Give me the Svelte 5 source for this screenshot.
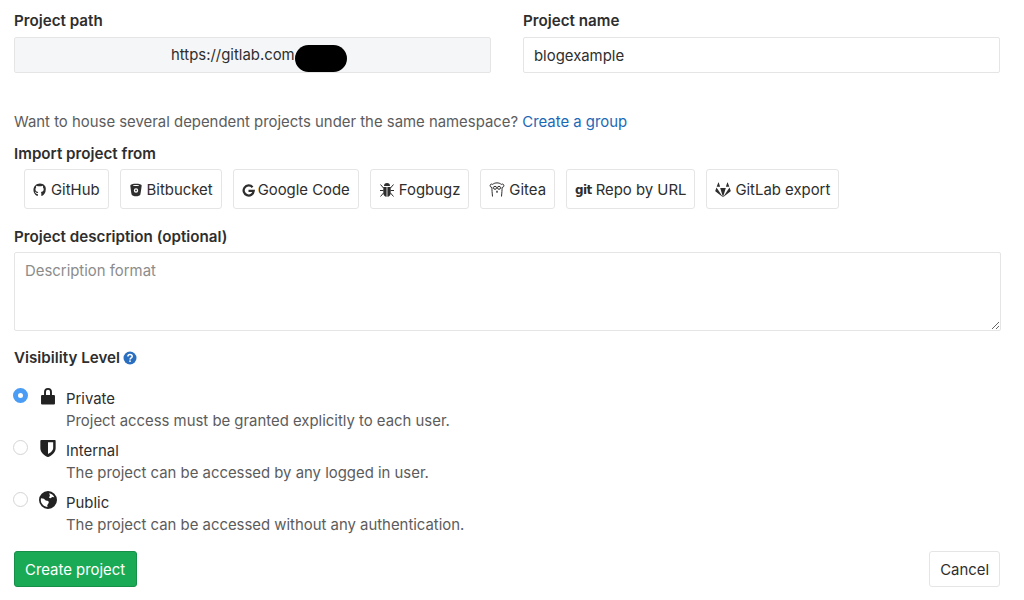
<script>
  let description = $state("");

  const importers = [
    { id: "github", label: "GitHub" },
    { id: "bitbucket", label: "Bitbucket" },
    { id: "google", label: "Google Code" },
    { id: "fogbugz", label: "Fogbugz" },
    { id: "gitea", label: "Gitea" },
    { id: "git", label: "Repo by URL" },
    { id: "gitlab", label: "GitLab export" },
  ];

  const levels = [
    { id: "private", label: "Private", help: "Project access must be granted explicitly to each user." },
    { id: "internal", label: "Internal", help: "The project can be accessed by any logged in user." },
    { id: "public", label: "Public", help: "The project can be accessed without any authentication." },
  ];

  let visibility = $state("private");
</script>

<form class="page" onsubmit={(e) => e.preventDefault()}>
  <div class="top-row">
    <div>
      <div class="label">Project path</div>
      <div class="path-field">
        <span>https://gitlab.com</span>
        <span class="blob"></span>
      </div>
    </div>
    <div>
      <div class="label">Project name</div>
      <input class="name-input" type="text" value="blogexample" />
    </div>
  </div>

  <p class="hint">
    Want to house several dependent projects under the same namespace?
    <a href="#group">Create a group</a>
  </p>

  <div class="label import-label">Import project from</div>
  <div class="importers">
    {#each importers as item}
      <button type="button" class="btn import-btn">
        {#if item.id === "github"}
          <svg class="icon" viewBox="0 0 16 16"><path d="M8 .5C3.800.5.500 3.800.500 8c0 3 1.700 5.600 4.300 6.800.4.100.7-.1.700-.5v-1.800c-1.300.2-2.100-.3-2.500-1.200-.2-.5-.5-.8-.9-1.100.6-.2 1.200.1 1.600.7.400.6 1 .8 1.800.5.100-.4.300-.8.600-1-2-.3-3.300-1.300-3.300-3.300 0-.9.300-1.600.8-2.100-.2-.6-.2-1.300.1-2 .8 0 1.400.3 2 .8.700-.2 2.900-.2 3.600 0 .6-.5 1.200-.8 2-.8.300.7.300 1.400.1 2 .5.500.8 1.200.8 2.100 0 2-1.300 3-3.300 3.300.4.300.6.800.6 1.400v2.500c0 .4.300.6.700.5 2.600-1.200 4.300-3.800 4.300-6.800C15.500 3.800 12.200.5 8 .5z" /></svg>
        {:else if item.id === "bitbucket"}
          <svg class="icon" viewBox="0 0 16 16"><path fill-rule="evenodd" d="M8 .8C4.500.8 1.500 1.500 1.500 2.800c0 .6 1 8.200 1.500 10.300.300 1.200 2.700 2.100 5 2.100s4.700-.9 5-2.100c.5-2.100 1.500-9.700 1.500-10.300C14.500 1.500 11.500.8 8 .8zm0 1.500c1.900 0 3.500.2 3.500.6S9.900 3.500 8 3.500s-3.500-.2-3.500-.6S6.100 2.300 8 2.300zM8 6a2.500 2.500 0 1 1 0 5 2.500 2.500 0 0 1 0-5zm0 1.500a1 1 0 1 0 0 2 1 1 0 0 0 0-2z" /></svg>
        {:else if item.id === "google"}
          <svg class="icon tight" viewBox="0 0 16 16"><path class="line thick" d="M13 4a6.200 6.200 0 1 0 1.400 4.500H8" /></svg>
        {:else if item.id === "fogbugz"}
          <svg class="icon wide" viewBox="0 0 16 16"><path d="M5 4a3 3 0 0 1 6 0zM4.300 5h3.300v9.800C5.500 14.600 4.300 13 4.300 11zM8.400 5h3.300v6c0 2-1.200 3.600-3.300 3.800z" /><path class="line" d="M1.500 2.500l3 3.500M14.500 2.500l-3 3.500M1 8.500h3.500M15 8.500h-3.500M1.500 14.500l3-3.500M14.500 14.500l-3-3.500" /></svg>
        {:else if item.id === "gitea"}
          <svg class="icon wide" viewBox="0 0 16 16"><path class="line" d="M3.500 14.500C3.200 11 2.800 7.500 3 5.500 1.500 5.300.800 4.200 1.200 3c.4-1 1.600-1.200 2.500-.6C5 1.200 6.500.900 8 .900s3 .3 4.300 1.500c.9-.6 2.100-.4 2.500.6.400 1.200-.3 2.300-1.800 2.500.2 2-.2 5.500-.5 9" /><circle class="line" cx="6" cy="5.800" r="1.500" /><circle class="line" cx="10" cy="5.800" r="1.500" /><path class="line" d="M7 9c.4.500 1.600.5 2 0M8 9.500v1.500" /></svg>
        {:else if item.id === "git"}
          <span class="git-mark">git</span>
        {:else if item.id === "gitlab"}
          <svg class="icon wide" viewBox="0 0 16 16"><path d="M8 15.200L.6 9.500c-.3-.2-.4-.5-.3-.8L1.500 5.500 8 15.200zM8 15.200L5.200 6h5.600L8 15.200zM8 15.200l6.500-9.700 1.200 3.200c.1.300 0 .6-.3.800L8 15.200zM1.700 4.800L3.200.7c.1-.3.500-.3.600 0l1.300 4.100zM14.300 4.800L12.800.7c-.1-.3-.5-.3-.6 0l-1.300 4.100z" /></svg>
        {/if}
        {item.label}
      </button>
    {/each}
  </div>

  <label class="label desc-label" for="description">Project description (optional)</label>
  <textarea id="description" class="desc" placeholder="Description format" bind:value={description}></textarea>

  <div class="label vis-label">
    Visibility Level
    <svg class="help" viewBox="0 0 14 14"><circle cx="7" cy="7" r="6.500" fill="#2a6fbf" /><path d="M4.900 5.500c0-1.300 1-2 2.100-2s2.200.7 2.200 1.900c0 1.500-2.100 1.500-2.100 3" fill="none" stroke="#fff" stroke-width="1.500" /><rect x="6.200" y="9.400" width="1.600" height="1.500" fill="#fff" /></svg>
  </div>

  <div class="levels">
    {#each levels as level}
      <label class="level">
        <input class="radio" type="radio" name="visibility" value={level.id} bind:group={visibility} />
        <span class="level-icon">
          {#if level.id === "private"}
            <svg viewBox="0 0 16 16"><path d="M4.500 7V4.300a3.500 3.500 0 0 1 7 0V7H9.800V4.300a1.800 1.800 0 0 0-3.600 0V7z" /><rect x="1.800" y="7" width="12.400" height="8.600" rx="1" /></svg>
          {:else if level.id === "internal"}
            <svg viewBox="0 0 16 16"><path fill-rule="evenodd" d="M2 .8h12c.4 0 .8.300.8.800v6.600c0 4-3.900 6.800-6.800 7.900-2.900-1.100-6.800-3.900-6.800-7.900V1.600c0-.5.400-.8.800-.8zm6 2v10.600c1.800-1 4.600-2.900 4.600-5.400V2.800z" /></svg>
          {:else}
            <svg viewBox="0 0 16 16"><path fill-rule="evenodd" d="M8 0a8 8 0 1 0 0 16A8 8 0 0 0 8 0zM1.900 6.500l2.400.3 1.700 1.700 2.300.4.400 1.600-1.400 2.200.3 1.500C4.500 14 1.600 11.400 1.600 8c0-.5.100-1 .3-1.500zM9 2c2 .3 3.800 1.700 4.600 3.500l-2.100-.2-.9 1.200-1.700-.6L9.700 4.100z" /></svg>
          {/if}
        </span>
        <span class="level-text">
          <span class="level-name">{level.label}</span>
          <span class="level-help">{level.help}</span>
        </span>
      </label>
    {/each}
  </div>

  <div class="actions">
    <button type="submit" class="btn create">Create project</button>
    <button type="button" class="btn cancel">Cancel</button>
  </div>
</form>

<style>
  :global(body) {
    background: #fff;
  }
  .page {
    padding: 12px 24px 0 14px;
    font-family: Inter, "Liberation Sans", sans-serif;
    font-size: 14.900px;
    color: #2e2e2e;
  }
  .top-row {
    display: grid;
    grid-template-columns: 477px 477px;
    gap: 32px;
  }
  .label {
    display: block;
    font-weight: 600;
    font-size: 15.200px;
    line-height: 17px;
    color: #2e2e2e;
  }
  .path-field {
    position: relative;
    box-sizing: border-box;
    height: 36px;
    margin-top: 8px;
    padding-left: 156px;
    line-height: 34px;
    background: #f5f6f8;
    border: 1px solid #e5e5e5;
    border-radius: 2px;
  }
  .blob {
    position: absolute;
    left: 280px;
    top: 7px;
    width: 52px;
    height: 27px;
    background: #000;
    border-radius: 14px;
  }
  .name-input {
    box-sizing: border-box;
    width: 100%;
    height: 36px;
    margin-top: 8px;
    padding: 2px 10px 0;
    font: inherit;
    color: #2e2e2e;
    border: 1px solid #e5e5e5;
    border-radius: 2px;
    outline: none;
  }
  .hint {
    margin: 40px 0 0;
    line-height: 18px;
    color: #5c5c5c;
  }
  .hint a {
    color: #1b69b6;
    text-decoration: none;
  }
  .import-label {
    margin-top: 14px;
  }
  .importers {
    display: flex;
    gap: 11px;
    margin-top: 7px;
    padding-left: 10px;
  }
  .btn {
    box-sizing: border-box;
    font: inherit;
    border-radius: 3px;
    cursor: pointer;
  }
  .import-btn {
    display: flex;
    align-items: center;
    gap: 4px;
    height: 40px;
    padding: 2px 8px 0;
    color: #2e2e2e;
    background: #fff;
    border: 1px solid #e5e5e5;
    white-space: nowrap;
  }
  .icon {
    width: 14px;
    height: 14px;
    fill: currentColor;
  }
  .icon.wide {
    width: 16px;
    height: 16px;
  }
  .icon.tight {
    width: 13px;
    height: 13px;
    margin-right: -1px;
  }
  .line {
    fill: none;
    stroke: currentColor;
    stroke-width: 1;
  }
  .thick {
    stroke-width: 2.800;
  }
  .git-mark {
    font-family: "DejaVu Sans", sans-serif;
    font-size: 12px;
    font-weight: 700;
    letter-spacing: -0.6px;
  }
  .desc-label {
    margin-top: 19px;
  }
  .desc {
    display: block;
    box-sizing: border-box;
    width: 987px;
    height: 79px;
    margin-top: 7px;
    padding: 9px 10px;
    font: inherit;
    color: #2e2e2e;
    border: 1px solid #e5e5e5;
    border-radius: 2px;
    outline: none;
  }
  .desc::placeholder {
    color: #8c8c8c;
  }
  .vis-label {
    display: flex;
    align-items: center;
    gap: 3px;
    margin-top: 18px;
  }
  .help {
    width: 14px;
    height: 14px;
  }
  .levels {
    display: flex;
    flex-direction: column;
    gap: 8px;
    margin-top: 19px;
  }
  .level {
    display: flex;
    height: 44px;
  }
  .radio {
    appearance: none;
    box-sizing: border-box;
    width: 15px;
    height: 15px;
    margin: 3px 0 0 -1px;
    background: #fff;
    border: 1px solid #d4d4d4;
    border-radius: 50%;
  }
  .radio:checked {
    background: #fff;
    border: 5px solid #4a9cf5;
  }
  .level-icon {
    width: 18px;
    height: 18px;
    margin: 2px 0 0 11px;
  }
  .level-icon svg {
    display: block;
    width: 18px;
    height: 18px;
    fill: #222;
  }
  .level-text {
    display: flex;
    flex-direction: column;
    margin: 3px 0 0 9px;
  }
  .level-name {
    line-height: 23px;
    color: #2e2e2e;
  }
  .level-help {
    line-height: 21px;
    color: #5c5c5c;
  }
  .actions {
    display: flex;
    justify-content: space-between;
    margin-top: 18px;
  }
  .create {
    height: 36px;
    padding: 2px 11px 0 10px;
    color: #fff;
    background: #1aaa55;
    border: 1px solid #168f48;
  }
  .cancel {
    height: 36px;
    padding: 2px 10px 0;
    color: #2e2e2e;
    background: #fff;
    border: 1px solid #e5e5e5;
  }
</style>
